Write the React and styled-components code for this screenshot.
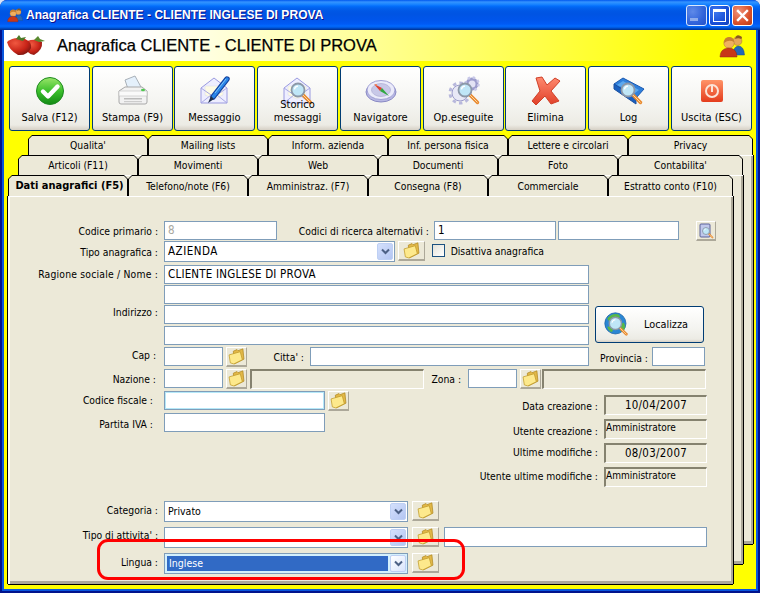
import React from 'react'
import styled, { createGlobalStyle } from 'styled-components'

const Global = createGlobalStyle`
    html, body {
        margin: 0;
        padding: 0;
        background: #d8e4f8;
        overflow: hidden;
    }
    * {
        box-sizing: border-box;
    }
`

const Window = styled.div`
    width: 760px;
    height: 593px;
    padding: 0 2px 2px;
    background: #00138c;
    border-radius: 7px 7px 0 0;
    display: flex;
    flex-direction: column;
    font-family: "DejaVu Sans Condensed", "Liberation Sans", Arial, sans-serif;
    font-size: 11px;
    color: #000;
`

const TitleBar = styled.div`
    height: 30px;
    margin: 0 -2px;
    padding: 0 7px;
    flex-shrink: 0;
    display: flex;
    align-items: center;
    border-radius: 7px 7px 0 0;
    background: linear-gradient(180deg, #0058ee 0, #3593ff 2px, #288eff 3px, #127dff 5px, #036ffc 6px, #0262ee 8px, #0057e5 11px, #0054e3 14px, #0055eb 20px, #005bf5 24px, #026afe 26px, #0062ef 27px, #0052d6 28px, #0040ab 29px, #003092 30px);
`

const TitleText = styled.div`
    margin-left: 3px;
    flex: 1;
    color: #fff;
    font-family: "Liberation Sans", Arial, sans-serif;
    font-size: 12px;
    font-weight: 700;
    letter-spacing: 0.05px;
    white-space: nowrap;
    text-shadow: 1px 1px #0f1089;
`

const CaptionBtn = styled.div`
    width: 21px;
    height: 21px;
    margin-left: 2px;
    border: 1px solid #fff;
    border-radius: 3px;
    display: flex;
    align-items: center;
    justify-content: center;
    background: ${({ $kind }) => ($kind === 'close'
        ? 'radial-gradient(circle at 30% 30%, #f0937a, #d9502a 60%, #b93a14)'
        : $kind === 'min'
            ? 'radial-gradient(circle at 30% 30%, #6f93ea, #3a66d8 60%, #2a4fc0)'
            : 'radial-gradient(circle at 30% 30%, #3f78ee, #1a50d8 60%, #1240b8)')};
    opacity: ${({ $kind }) => ($kind === 'min' ? 0.85 : 1)};
`

const MinBar = styled.div`
    width: 8px;
    height: 3px;
    margin: 9px 5px 0 0;
    background: #a9bcec;
`

const MaxBox = styled.div`
    width: 13px;
    height: 13px;
    border: 1px solid #fff;
    border-top-width: 3px;
`

const Client = styled.div`
    flex: 1;
    min-height: 0;
    border: 2px solid #0855dd;
    border-top: none;
    background: #ffff00;
    display: flex;
    flex-direction: column;
`

const Header = styled.div`
    height: 31px;
    padding: 0 11px 0 3px;
    display: flex;
    align-items: center;
    flex-shrink: 0;
    background: linear-gradient(90deg, #fff 0, #fff 18%, #ffff00 92%);
`

const HeaderText = styled.div`
    margin-left: 12px;
    flex: 1;
    font-family: "Liberation Sans", Arial, sans-serif;
    font-size: 16.5px;
    -webkit-text-stroke: 0.25px #000;
    white-space: nowrap;
`

const Toolbar = styled.div`
    margin: 5px 0 0 5px;
    display: flex;
    flex-shrink: 0;
`

const ToolButton = styled.div`
    width: 81px;
    height: 65px;
    margin-right: ${({ $gap }) => $gap}px;
    padding: 8px 0 6px;
    flex-shrink: 0;
    border: 1px solid #003c74;
    border-radius: 3px;
    background: linear-gradient(180deg, #fff 0, #f4f4f0 60%, #ecebe4 92%, #d6d0c5 100%);
    display: flex;
    flex-direction: column;
    align-items: center;
    justify-content: space-between;
`

const ToolLabel = styled.div`
    height: 13px;
    display: flex;
    flex-direction: column;
    justify-content: flex-end;
    align-items: center;
    line-height: 13px;
    text-align: center;
    white-space: nowrap;
`

const Stack = styled.div`
    margin: 4px 0 0 4px;
    display: grid;
    grid-template-columns: 745px;
    grid-template-rows: 449px;
`

const Sheet = styled.div`
    grid-area: 1 / 1;
    margin-left: ${({ $ml }) => $ml}px;
    margin-top: ${({ $mt }) => $mt}px;
    width: 725px;
    height: 409px;
    display: flex;
    flex-direction: column;
`

const TabRow = styled.div`
    display: flex;
    flex-shrink: 0;
    height: ${({ $h }) => $h}px;
`

const Tab = styled.div`
    flex: ${({ $last }) => ($last ? '1' : '0 0 120px')};
    height: 100%;
    padding: 1px 1px 0 1px;
    background: #000;
    clip-path: polygon(0 4px, 4px 0, calc(100% - 4px) 0, 100% 4px, 100% 100%, 0 100%);
`

const TabFace = styled.div`
    height: 100%;
    display: flex;
    align-items: center;
    justify-content: center;
    padding: 0 0 1px ${({ $active }) => ($active ? '3px' : '0')};
    background: #ece9d8;
    clip-path: polygon(0 3px, 3px 0, calc(100% - 3px) 0, 100% 3px, 100% 100%, 0 100%);
    font-size: ${({ $active }) => ($active ? '11px' : '10.3px')};
    font-weight: ${({ $active }) => ($active ? 700 : 400)};
    white-space: nowrap;
`

const Page = styled.div`
    position: relative;
    flex: 1;
    min-height: 0;
    background: #ece9d8;
    border-top: 1px solid #fff;
    border-left: 2px solid #fff;
    box-shadow: -1px 0 #000, 1px 0 #000, 0 1px #000, inset -2px -3px #aca899;
    padding-top: 24px;
`

const Row = styled.div`
    display: flex;
    align-items: flex-start;
    height: ${({ $h }) => $h || 20}px;
    margin-top: ${({ $mt }) => $mt || 0}px;
`

const Label = styled.div`
    width: ${({ $w }) => $w}px;
    padding-right: ${({ $pr }) => $pr || 0}px;
    margin-right: ${({ $mr }) => ($mr === undefined ? 6 : $mr)}px;
    margin-top: ${({ $top }) => ($top === undefined ? 3 : $top)}px;
    flex-shrink: 0;
    text-align: right;
    white-space: nowrap;
    font-size: 10.3px;
    letter-spacing: ${({ $ls }) => $ls || 0}px;
    line-height: 14px;
`

const TextBox = styled.div`
    width: ${({ $w }) => $w}px;
    height: ${({ $h }) => $h || 19}px;
    margin-left: ${({ $ml }) => $ml || 0}px;
    flex-shrink: 0;
    padding-left: 3px;
    border: 1px solid #7f9db9;
    background: #fff;
    box-shadow: ${({ $focus }) => ($focus ? 'inset 0 0 0 1px #b5e8f8' : 'none')};
    color: ${({ $muted }) => ($muted ? '#a8a8a0' : '#000')};
    font-size: 11.5px;
    letter-spacing: 0.2px;
    line-height: 17px;
    white-space: nowrap;
`

const Combo = styled.div`
    width: ${({ $w }) => $w}px;
    height: ${({ $h }) => $h || 21}px;
    padding: ${({ $focus }) => ($focus ? '2px 0 2px 2px' : '0')};
    flex-shrink: 0;
    display: flex;
    border: 1px solid #7f9db9;
    background: ${({ $focus }) => ($focus ? '#d4f0fc' : '#fff')};
`

const ComboValue = styled.div`
    flex: 1;
    padding-left: ${({ $focus }) => ($focus ? '2px' : '3px')};
    background: ${({ $focus }) => ($focus ? '#316ac5' : 'transparent')};
    color: ${({ $focus }) => ($focus ? '#fff' : '#000')};
    font-size: ${({ $caps }) => ($caps ? '11.5px' : '10.5px')};
    letter-spacing: ${({ $caps }) => ($caps ? '0.5px' : '0')};
    line-height: ${({ $focus }) => ($focus ? '15px' : '19px')};
`

const ComboArrow = styled.div`
    width: 16px;
    margin: ${({ $focus }) => ($focus ? '-1px 1px -1px 2px' : '1px')};
    flex-shrink: 0;
    border-radius: 2px;
    border: 1px solid #bed0f4;
    background: ${({ $focus }) => ($focus ? 'linear-gradient(135deg, #fff, #d8e4fc)' : 'linear-gradient(135deg, #d4e0fc, #b4c6f2)')};
    display: flex;
    align-items: center;
    justify-content: center;
`

const RaisedBtn = styled.div`
    width: ${({ $w }) => $w}px;
    height: ${({ $h }) => $h || 20}px;
    margin-left: ${({ $ml }) => ($ml === undefined ? 3 : $ml)}px;
    flex-shrink: 0;
    display: flex;
    align-items: center;
    justify-content: center;
    background: #ece9d8;
    border-top: 1px solid #fff;
    border-left: 1px solid #fff;
    border-right: 1px solid #aca899;
    border-bottom: 2px solid #aca899;
`

const Sunken = styled.div`
    width: ${({ $w }) => $w}px;
    height: ${({ $h }) => $h || 20}px;
    margin-left: ${({ $ml }) => $ml || 0}px;
    flex-shrink: 0;
    border-top: 2px solid #85826f;
    border-left: 2px solid #85826f;
    border-right: 1px solid #fff;
    border-bottom: 1px solid #fff;
    text-align: ${({ $center }) => ($center ? 'center' : 'left')};
    font-size: ${({ $center }) => ($center ? '11.4px' : '10px')};
    letter-spacing: ${({ $center }) => ($center ? '0.3px' : '0')};
    line-height: ${({ $center }) => ($center ? '17px' : '13px')};
    white-space: nowrap;
`

const CheckBox = styled.div`
    width: 13px;
    height: 13px;
    margin: 3px 3px 0 7px;
    flex-shrink: 0;
    border: 1px solid #1c5180;
    background: linear-gradient(135deg, #e4e2d8, #fff);
`

const Address = styled.div`
    margin-top: 3px;
    display: flex;
    align-items: flex-start;
`

const AddressFields = styled.div`
    width: 579px;
    flex-shrink: 0;
`

const LocateButton = styled.div`
    width: 109px;
    height: 37px;
    margin: 41px 0 0 6px;
    padding: 0 0 0 8px;
    border: 1px solid #003c74;
    border-radius: 3px;
    background: linear-gradient(180deg, #fff 0, #f4f4f0 60%, #ecebe4 92%, #d6d0c5 100%);
    display: flex;
    align-items: center;
`

const LocateText = styled.div`
    margin-left: 14px;
    font-size: 10.8px;
`

const Lower = styled.div`
    width: 697px;
    display: flex;
    justify-content: space-between;
`

const InfoList = styled.div`
    margin-top: 4px;
    display: flex;
    flex-direction: column;
    gap: 4px;
`

const InfoRow = styled.div`
    display: flex;
    align-items: flex-start;
    justify-content: flex-end;
`

const Highlight = styled.div`
    position: absolute;
    left: 87px;
    top: 342px;
    width: 368px;
    height: 41px;
    border: 3px solid #ff0000;
    border-radius: 11px;
`

const Lens = ({ x = 18, y = 16, r = 7 }) => (
    <g>
        <line x1={x + r * 0.7} y1={y + r * 0.7} x2={x + r + 6} y2={y + r + 6} stroke="#e88a30" strokeWidth="3.4" strokeLinecap="round" />
        <line x1={x + r * 0.7} y1={y + r * 0.7} x2={x + r + 6} y2={y + r + 6} stroke="#ffd9a0" strokeWidth="1" />
        <circle cx={x} cy={y} r={r} fill="#bfe6f7" stroke="#8c98a8" strokeWidth="1.8" />
        <path d={`M${x - r * 0.55} ${y - r * 0.1} A${r * 0.6} ${r * 0.6} 0 0 1 ${x} ${y - r * 0.6}`} fill="none" stroke="#fff" strokeWidth="1.3" />
    </g>
)

const Ic = ({ children, size = 32, vb = 32 }) => (
    <svg width={size} height={size} viewBox={`0 0 ${vb} ${vb}`}>{children}</svg>
)

const SaveIcon = () => (
    <Ic>
        <defs>
            <linearGradient id="gSave" x1="0" y1="0" x2="0" y2="1">
                <stop offset="0" stopColor="#9ae66a" />
                <stop offset="0.5" stopColor="#3cc02c" />
                <stop offset="1" stopColor="#128a14" />
            </linearGradient>
        </defs>
        <circle cx="16" cy="16" r="13.5" fill="url(#gSave)" stroke="#1d8a20" />
        <path d="M9 16.5 L14 21.5 L23.5 11.5" fill="none" stroke="#fff" strokeWidth="4.4" strokeLinejoin="round" strokeLinecap="round" />
    </Ic>
)

const PrintIcon = () => (
    <Ic>
        <polygon points="8,5 18,1 24,12 12,17" fill="#e4f0fb" stroke="#a8b0b8" />
        <path d="M2 16 L8 12 L25 12 L30 16 L30 27 Q30 29 28 29 L4 29 Q2 29 2 27 Z" fill="#f2f2f2" stroke="#a8a8a8" />
        <path d="M2 16 L30 16 L30 21 L2 21 Z" fill="#fafafa" stroke="#c0c0c0" strokeWidth="0.6" />
        <rect x="7" y="23" width="18" height="1.5" fill="#bbb" />
        <rect x="7" y="26" width="18" height="1.2" fill="#ccc" />
        <ellipse cx="26" cy="15" rx="2" ry="1.2" fill="#50c850" />
    </Ic>
)

const Envelope = () => (
    <g>
        <polygon points="2,13 15,3 28,13 28,28 2,28" fill="#eeeeff" stroke="#9a9ae0" />
        <polygon points="6,11 24,11 24,20 15,24 6,20" fill="#fdfbe4" stroke="#d8d8e8" strokeWidth="0.5" />
        <path d="M2 13 L15 22 L28 13 M2 28 L12 20 M28 28 L18 20" fill="none" stroke="#a8a8e4" />
    </g>
)

const MailIcon = () => (
    <Ic>
        <Envelope />
        <line x1="28" y1="4" x2="14" y2="22" stroke="#123f9c" strokeWidth="5.4" strokeLinecap="round" />
        <line x1="28" y1="4" x2="14" y2="22" stroke="#2a86e8" strokeWidth="3.4" strokeLinecap="round" />
        <line x1="27" y1="4" x2="16" y2="18" stroke="#8cc8f8" strokeWidth="0.9" />
        <polygon points="12,21 15,24 9,28" fill="#20304c" />
    </Ic>
)

const HistoryIcon = () => (
    <Ic>
        <Envelope />
        <Lens x={16} y={15} r={6.5} />
    </Ic>
)

const CompassIcon = () => (
    <Ic>
        <ellipse cx="16" cy="17" rx="15" ry="10" fill="#b8b8e4" stroke="#8a8ac4" />
        <ellipse cx="16" cy="15" rx="14" ry="9.5" fill="#ebebfa" stroke="#a0a0d4" />
        <ellipse cx="16" cy="15" rx="9.5" ry="6.5" fill="#c8c8e8" stroke="#a4a4cc" strokeWidth="0.6" />
        <polygon points="9,9 17,13 15,16" fill="#e04030" />
        <polygon points="24,21 17,13 15,16" fill="#30a840" />
        <circle cx="11" cy="10" r="1" fill="#f08050" />
    </Ic>
)

const GearsIcon = () => (
    <Ic>
        <circle cx="24" cy="9" r="5" fill="#e2e2f4" stroke="#9c9ccc" strokeWidth="3" />
        <circle cx="24" cy="9" r="6.5" fill="none" stroke="#c8c8e8" strokeWidth="2.5" strokeDasharray="2.4 2.7" />
        <circle cx="12" cy="18" r="8" fill="#e8e8f6" stroke="#9c9ccc" strokeWidth="1" />
        <circle cx="12" cy="18" r="10" fill="none" stroke="#b8b8dc" strokeWidth="3" strokeDasharray="3.4 3.2" />
        <Lens x={17} y={15} r={6.5} />
    </Ic>
)

const DeleteIcon = () => (
    <Ic>
        <defs>
            <linearGradient id="gDel" x1="0" y1="0" x2="0" y2="1">
                <stop offset="0" stopColor="#ff8a70" />
                <stop offset="1" stopColor="#e04028" />
            </linearGradient>
        </defs>
        <polygon points="6,3 12,2 17,10 25,3 30,6 21,16 29,26 21,29 15,21 6,30 2,26 10,16" fill="url(#gDel)" stroke="#d04028" strokeLinejoin="round" />
    </Ic>
)

const LogIcon = () => (
    <Ic>
        <polygon points="1,9 10,3 31,14 23,23" fill="#2f80dc" stroke="#1a58b0" />
        <polygon points="1,9 23,23 23,29 1,14" fill="#1a60c0" stroke="#1a50a0" />
        <polygon points="4,10 10,6 26,15 22,18" fill="#5ca8ee" />
        <Lens x={15} y={15} r={6.5} />
    </Ic>
)

const ExitIcon = () => (
    <Ic>
        <defs>
            <linearGradient id="gExit" x1="0" y1="0" x2="0" y2="1">
                <stop offset="0" stopColor="#ff9468" />
                <stop offset="1" stopColor="#e43c1c" />
            </linearGradient>
        </defs>
        <rect x="5" y="5" width="22" height="22" rx="2" fill="url(#gExit)" />
        <circle cx="16" cy="16" r="6" fill="none" stroke="#fbe4d8" strokeWidth="2" />
        <line x1="16" y1="11" x2="16" y2="17" stroke="#fbe4d8" strokeWidth="2" />
    </Ic>
)

const Users = ({ size }) => (
    <Ic size={size} vb={26}>
        <circle cx="18.5" cy="8" r="4.4" fill="#e8a858" stroke="#a87030" strokeWidth="0.5" />
        <path d="M17 3.5 Q19 1 23 4 L22.5 6 Q19 4.5 16 6 Z" fill="#8a5a20" />
        <path d="M14 22 Q14 14 19 13 Q25 13 25.5 22 Z" fill="#2468b8" stroke="#184c90" strokeWidth="0.5" />
        <circle cx="10" cy="10" r="5.2" fill="#f0b060" stroke="#b07830" strokeWidth="0.5" />
        <path d="M5 10 Q5 4 10 4 Q15 4 15 9 Q10 6 5 10 Z" fill="#c88030" />
        <path d="M1 24 Q1 16 9 15 Q18 15 18 24 Z" fill="#c83818" stroke="#902810" strokeWidth="0.5" />
    </Ic>
)

const Berries = () => (
    <svg width="38" height="21" viewBox="0 0 38 21">
        <defs>
            <radialGradient id="gBerry" cx="0.35" cy="0.3" r="0.8">
                <stop offset="0" stopColor="#f05840" />
                <stop offset="0.6" stopColor="#c82418" />
                <stop offset="1" stopColor="#701410" />
            </radialGradient>
        </defs>
        <path d="M20 6 Q29 3 35 7 Q36 15 27 20 Q19 19 19 11 Z" fill="url(#gBerry)" />
        <path d="M0 7 Q7 1 18 4 Q25 7 24 13 Q20 21 11 20 Q2 15 0 7 Z" fill="url(#gBerry)" />
        <path d="M9 4 L12 0 L14 3 L19 2 L16 6 Z" fill="#4c7a28" />
        <path d="M27 5 L31 1 L33 4 L38 6 L32 7 Z" fill="#5a8a30" />
    </svg>
)

const FolderIcon = () => (
    <svg width="17" height="17" viewBox="0 0 16 16">
        <path d="M5 3 L8.5 1.5 L9.5 2.5 L14 0.8 L15 10.5 L6 15 Z" fill="#e2b848" stroke="#b08820" strokeWidth="0.7" strokeLinejoin="round" />
        <path d="M1 6.5 L11.5 3.5 L13.5 11 L5.5 15 L2.2 14 Z" fill="#fde98c" stroke="#c09a28" strokeWidth="0.7" strokeLinejoin="round" />
    </svg>
)

const PageIcon = () => (
    <Ic size={16} vb={32}>
        <rect x="4" y="2" width="20" height="26" rx="2" fill="#c0c8ec" stroke="#5a6098" strokeWidth="2" />
        <Lens x={16} y={16} r={7} />
    </Ic>
)

const GlobeIcon = () => (
    <Ic size={26} vb={32}>
        <circle cx="14" cy="14" r="13" fill="#2a86d4" stroke="#1f68a8" />
        <path d="M4 8 Q10 1 18 3 Q22 6 16 9 Q12 8 11 13 Q7 14 4 8 Z M20 22 Q18 16 24 13 Q27 16 25 22 Q22 26 20 22 Z M4 18 Q9 17 11 22 Q10 26 8 24 Q5 22 4 18 Z" fill="#58b848" />
        <Lens x={14} y={14} r={7.5} />
    </Ic>
)

const Chevron = () => (
    <svg width="9" height="7" viewBox="0 0 9 7">
        <path d="M1 1.5 L4.5 5 L8 1.5" fill="none" stroke="#4d6185" strokeWidth="2" />
    </svg>
)

const CloseX = () => (
    <svg width="13" height="13" viewBox="0 0 13 13">
        <path d="M2 2 L11 11 M11 2 L2 11" stroke="#fff" strokeWidth="2.4" strokeLinecap="square" />
    </svg>
)

const tools = [
    { label: 'Salva (F12)', icon: <SaveIcon />, gap: 2 },
    { label: 'Stampa (F9)', icon: <PrintIcon />, gap: 1 },
    { label: 'Messaggio', icon: <MailIcon />, gap: 2 },
    { label: <>Storico<br />messaggi</>, icon: <HistoryIcon />, gap: 2 },
    { label: 'Navigatore', icon: <CompassIcon />, gap: 2 },
    { label: 'Op.eseguite', icon: <GearsIcon />, gap: 1 },
    { label: 'Elimina', icon: <DeleteIcon />, gap: 2 },
    { label: 'Log', icon: <LogIcon />, gap: 2 },
    { label: 'Uscita (ESC)', icon: <ExitIcon />, gap: 0 },
]

const backTabs = ["Qualita'", 'Mailing lists', 'Inform. azienda', 'Inf. persona fisica', 'Lettere e circolari', 'Privacy']
const midTabs = ['Articoli (F11)', 'Movimenti', 'Web', 'Documenti', 'Foto', "Contabilita'"]
const frontTabs = ['Dati anagrafici (F5)', 'Telefono/note (F6)', 'Amministraz. (F7)', 'Consegna (F8)', 'Commerciale', 'Estratto conto (F10)']

const Tabs = ({ items, h, active }) => (
    <TabRow $h={h}>
        {items.map((t, i) => (
            <Tab key={t} $last={i === items.length - 1}>
                <TabFace $active={active && i === 0}>{t}</TabFace>
            </Tab>
        ))}
    </TabRow>
)

const Folder = ({ w = 21, h, ml }) => (
    <RaisedBtn $w={w} $h={h} $ml={ml}><FolderIcon /></RaisedBtn>
)

const Select = ({ w, h, value, focus, caps }) => (
    <Combo $w={w} $h={h} $focus={focus}>
        <ComboValue $focus={focus} $caps={caps}>{value}</ComboValue>
        <ComboArrow $focus={focus}><Chevron /></ComboArrow>
    </Combo>
)

const App = () => {
    return (
        <>
            <Global />
            <Window>
                <TitleBar>
                    <Users size={16} />
                    <TitleText>Anagrafica CLIENTE - CLIENTE INGLESE DI PROVA</TitleText>
                    <CaptionBtn $kind="min"><MinBar /></CaptionBtn>
                    <CaptionBtn $kind="max"><MaxBox /></CaptionBtn>
                    <CaptionBtn $kind="close"><CloseX /></CaptionBtn>
                </TitleBar>
                <Client>
                    <Header>
                        <Berries />
                        <HeaderText>Anagrafica CLIENTE - CLIENTE DI PROVA</HeaderText>
                        <Users size={26} />
                    </Header>
                    <Toolbar>
                        {tools.map((t, i) => (
                            <ToolButton key={i} $gap={t.gap}>
                                {t.icon}
                                <ToolLabel>{t.label}</ToolLabel>
                            </ToolButton>
                        ))}
                    </Toolbar>
                    <Stack>
                        <Sheet $ml={20} $mt={0}>
                            <Tabs items={backTabs} h={20} />
                            <Page />
                        </Sheet>
                        <Sheet $ml={10} $mt={20}>
                            <Tabs items={midTabs} h={20} />
                            <Page />
                        </Sheet>
                        <Sheet $ml={0} $mt={40}>
                            <Tabs items={frontTabs} h={21} active />
                            <Page>
                                <Row>
                                    <Label $w={148}>Codice primario :</Label>
                                    <TextBox $w={113} $muted>8</TextBox>
                                    <Label $w={152} $mr={5}>Codici di ricerca alternativi :</Label>
                                    <TextBox $w={122}>1</TextBox>
                                    <TextBox $w={121} $ml={2} />
                                    <RaisedBtn $w={20} $ml={17}><PageIcon /></RaisedBtn>
                                </Row>
                                <Row $h={21}>
                                    <Label $w={148} $top={4}>Tipo anagrafica :</Label>
                                    <Select w={231} value="AZIENDA" caps />
                                    <Folder w={27} />
                                    <CheckBox />
                                    <Label $w={96} $mr={0} $top={3}>Disattiva anagrafica</Label>
                                </Row>
                                <Address>
                                    <AddressFields>
                                        <Row>
                                            <Label $w={148} $top={2} $ls={0.2}>Ragione sociale / Nome :</Label>
                                            <TextBox $w={425}>CLIENTE INGLESE DI PROVA</TextBox>
                                        </Row>
                                        <Row>
                                            <Label $w={148} />
                                            <TextBox $w={425} />
                                        </Row>
                                        <Row $h={21}>
                                            <Label $w={148} $top={0}>Indirizzo :</Label>
                                            <TextBox $w={425} />
                                        </Row>
                                        <Row>
                                            <Label $w={148} />
                                            <TextBox $w={425} />
                                        </Row>
                                    </AddressFields>
                                    <LocateButton>
                                        <GlobeIcon />
                                        <LocateText>Localizza</LocateText>
                                    </LocateButton>
                                </Address>
                                <Row $mt={1} $h={22}>
                                    <Label $w={148} $pr={2} $top={1}>Cap :</Label>
                                    <TextBox $w={59} />
                                    <Folder />
                                    <Label $w={57} $top={3}>Citta' :</Label>
                                    <TextBox $w={279} />
                                    <Label $w={59} $mr={4} $top={4}>Provincia :</Label>
                                    <TextBox $w={53} />
                                </Row>
                                <Row $h={22}>
                                    <Label $w={148} $pr={2} $top={3}>Nazione :</Label>
                                    <TextBox $w={59} />
                                    <Folder />
                                    <Sunken $w={174} $ml={3} />
                                    <Label $w={37} $mr={7} $top={3}>Zona :</Label>
                                    <TextBox $w={49} />
                                    <Folder />
                                    <Sunken $w={164} $ml={1} />
                                </Row>
                                <Lower>
                                    <div>
                                        <Row $h={22}>
                                            <Label $w={148} $pr={5} $top={2}>Codice fiscale :</Label>
                                            <TextBox $w={161} $focus />
                                            <Folder />
                                        </Row>
                                        <Row>
                                            <Label $w={148} $pr={5} $top={4}>Partita IVA :</Label>
                                            <TextBox $w={161} />
                                        </Row>
                                    </div>
                                    <InfoList>
                                        <InfoRow>
                                            <Label $w={160} $top={4}>Data creazione :</Label>
                                            <Sunken $w={103} $center>10/04/2007</Sunken>
                                        </InfoRow>
                                        <InfoRow>
                                            <Label $w={160} $top={5}>Utente creazione :</Label>
                                            <Sunken $w={103}>Amministratore</Sunken>
                                        </InfoRow>
                                        <InfoRow>
                                            <Label $w={160} $top={2}>Ultime modifiche :</Label>
                                            <Sunken $w={103} $center>08/03/2007</Sunken>
                                        </InfoRow>
                                        <InfoRow>
                                            <Label $w={180} $top={2}>Utente ultime modifiche :</Label>
                                            <Sunken $w={103}>Amministratore</Sunken>
                                        </InfoRow>
                                    </InfoList>
                                </Lower>
                                <Row $mt={14} $h={21}>
                                    <Label $w={148} $top={2}>Categoria :</Label>
                                    <Select w={244} value="Privato" />
                                    <Folder w={27} ml={4} />
                                </Row>
                                <Row $mt={5} $h={21}>
                                    <Label $w={148} $top={1}>Tipo di attivita' :</Label>
                                    <Select w={244} value="" />
                                    <Folder w={27} ml={4} />
                                    <TextBox $w={263} $h={20} $ml={5} />
                                </Row>
                                <Row $mt={5} $h={21}>
                                    <Label $w={148} $top={2}>Lingua :</Label>
                                    <Select w={244} value="Inglese" focus />
                                    <Folder w={27} ml={4} />
                                </Row>
                                <Highlight />
                            </Page>
                        </Sheet>
                    </Stack>
                </Client>
            </Window>
        </>
    )
}

export default App
